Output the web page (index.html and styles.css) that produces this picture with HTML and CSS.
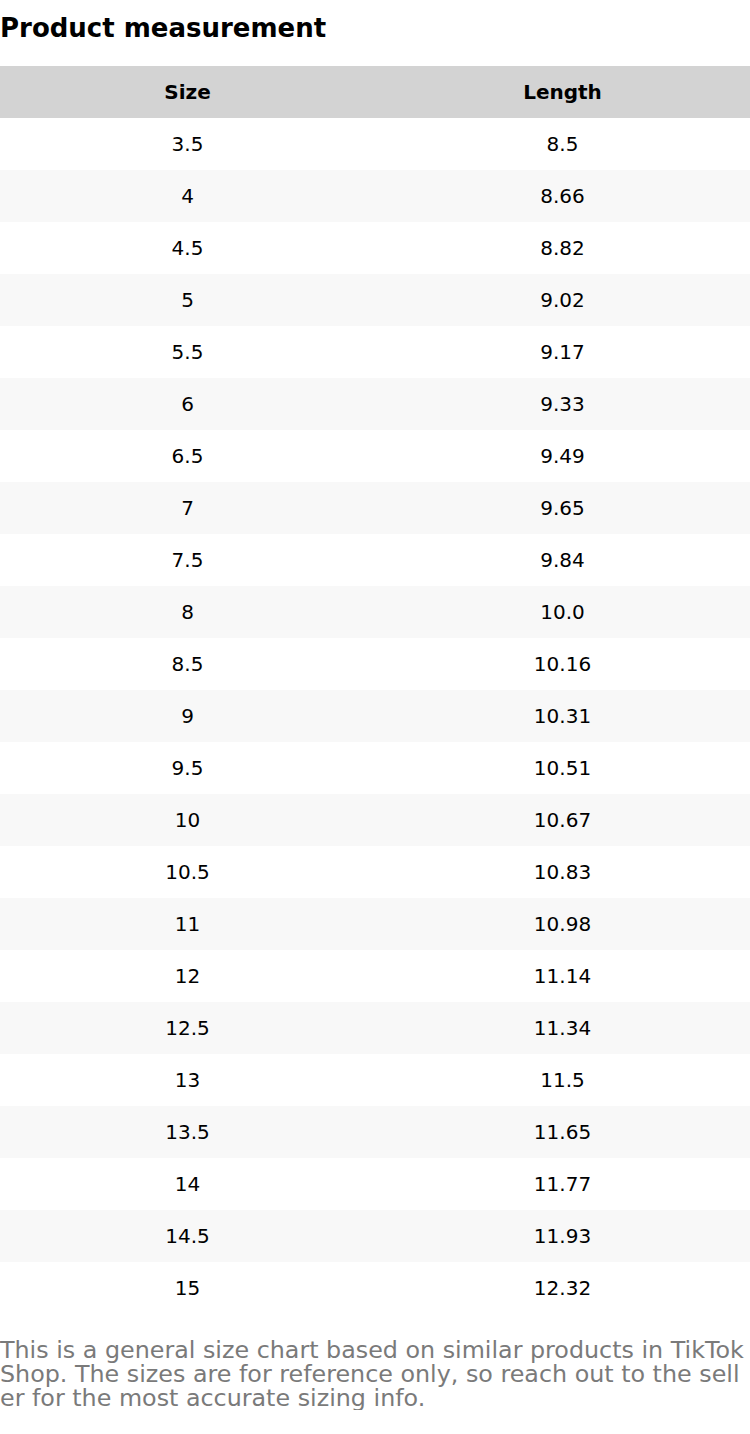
FILE: index.html
```html
<!DOCTYPE html>
<html>
<head>
<meta charset="utf-8">
<link rel="stylesheet" href="styles.css">
</head>
<body>
<h1 class="title">Product measurement</h1>
<table class="chart">
<thead><tr><th>Size</th><th>Length</th></tr></thead>
<tbody>
<tr><td>3.5</td><td>8.5</td></tr>
<tr><td>4</td><td>8.66</td></tr>
<tr><td>4.5</td><td>8.82</td></tr>
<tr><td>5</td><td>9.02</td></tr>
<tr><td>5.5</td><td>9.17</td></tr>
<tr><td>6</td><td>9.33</td></tr>
<tr><td>6.5</td><td>9.49</td></tr>
<tr><td>7</td><td>9.65</td></tr>
<tr><td>7.5</td><td>9.84</td></tr>
<tr><td>8</td><td>10.0</td></tr>
<tr><td>8.5</td><td>10.16</td></tr>
<tr><td>9</td><td>10.31</td></tr>
<tr><td>9.5</td><td>10.51</td></tr>
<tr><td>10</td><td>10.67</td></tr>
<tr><td>10.5</td><td>10.83</td></tr>
<tr><td>11</td><td>10.98</td></tr>
<tr><td>12</td><td>11.14</td></tr>
<tr><td>12.5</td><td>11.34</td></tr>
<tr><td>13</td><td>11.5</td></tr>
<tr><td>13.5</td><td>11.65</td></tr>
<tr><td>14</td><td>11.77</td></tr>
<tr><td>14.5</td><td>11.93</td></tr>
<tr><td>15</td><td>12.32</td></tr>
</tbody>
</table>
<p class="note">This is a general size chart based on similar products in TikTok Shop. The sizes are for reference only, so reach out to the seller for the most accurate sizing info.</p>
</body>
</html>
```
FILE: styles.css
```css
html, body {
  margin: 0;
  padding: 0;
  background: #ffffff;
  font-family: "DejaVu Sans", sans-serif;
  color: #000;
}
.title {
  margin: 0;
  font-size: 26px;
  font-weight: bold;
  line-height: 56px;
  height: 66px;
}
.chart {
  width: 750px;
  border-collapse: collapse;
  table-layout: fixed;
}
.chart th, .chart td {
  width: 50%;
  height: 52px;
  padding: 0;
  text-align: center;
  font-size: 20px;
}
.chart th {
  background: #d3d3d3;
  font-weight: bold;
}
.chart tbody tr:nth-child(even) td {
  background: #f8f8f8;
}
.note {
  margin: 24px 0 0;
  font-size: 23.8px;
  line-height: 24px;
  color: #7a7a7a;
  word-break: break-all;
}
```
